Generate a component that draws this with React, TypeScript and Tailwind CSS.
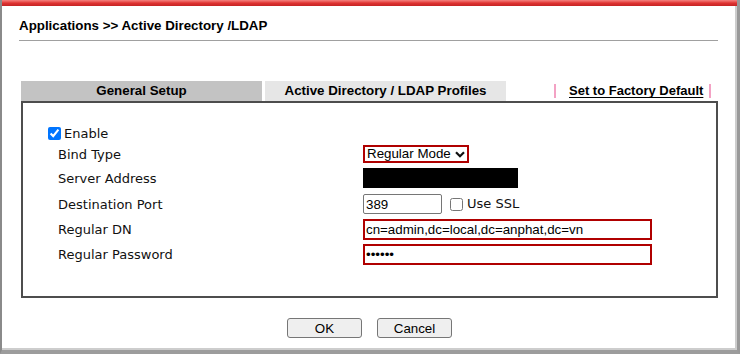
import React from "react";

const labelFont = "font-['DejaVu_Sans',Verdana,sans-serif] text-[13px] text-[#111]";
const arial = "font-['Liberation_Sans',Arial,sans-serif]";

function Row({label, mt, h, children}: {label: string; mt: string; h: string; children: React.ReactNode}) {
    return (
        <div className={`flex items-center pl-[35px] ${mt} ${h}`}>
            <div className={`w-[305px] pt-[1px] ${labelFont}`}>{label}</div>
            <div className="flex items-center">{children}</div>
        </div>
    );
}

export default function App() {
    return (
        <div className="w-[740px] h-[354px] bg-white flex flex-col border-l-2 border-r-[3px] border-b-[4px] border-l-[#8a8a8a] border-r-[#999] border-b-[#9c9c9c] shadow-[inset_-2px_-2px_0_#cdcdcd]">
            <div className="h-[6px] shrink-0 bg-gradient-to-b from-[#f58080] via-[#e03232] to-[#c42424]"/>

            <div className={`pl-[17px] pt-[12px] text-[13.33px] leading-[16px] font-bold text-black ${arial}`}>
                Applications &gt;&gt; Active Directory /LDAP
            </div>
            <div className="ml-[17px] mt-[6px] w-[699px] border-t border-[#a0a0a0]"/>

            {/* tabs */}
            <div className={`ml-[19px] mt-[40px] flex items-center h-[20px] text-[13.33px] font-bold text-black ${arial}`}>
                <div className="w-[241px] h-full bg-[#c3c3c3] flex items-center justify-center">General Setup</div>
                <div className="w-[241px] h-full ml-[3px] bg-[#e6e6e6] flex items-center justify-center">Active Directory / LDAP Profiles</div>
                <div className="ml-[48px] flex items-center">
                    <span className="w-[2px] h-[14px] bg-[#f3a2c4]"/>
                    <span className="ml-[13px] text-[13px] underline underline-offset-2">Set to Factory Default</span>
                    <span className="ml-[6px] w-[2px] h-[14px] bg-[#f3a2c4]"/>
                </div>
            </div>

            {/* box */}
            <div className="ml-[19px] w-[697px] border-2 border-[#4d4d4d] pt-[20px] pb-[31px]">
                <div className="flex items-center h-[20px] pl-[25px] pt-[1px]">
                    <input type="checkbox" defaultChecked className="w-[13px] h-[13px] accent-[#0075ff]"/>
                    <span className={`ml-[3px] ${labelFont}`}>Enable</span>
                </div>
                <Row label="Bind Type" mt="mt-[1px]" h="h-[20px]">
                    <div className={`w-[106px] h-[18px] border-2 border-[#b00000] flex items-center pl-[2px] text-[13.33px] text-black ${arial}`}>
                        <span>Regular Mode</span>
                        <svg width="10" height="7" viewBox="0 0 10 7" className="ml-[4px]">
                            <path d="M1 1.2 5 5.2 9 1.2" fill="none" stroke="#111" strokeWidth="2.2"/>
                        </svg>
                    </div>
                </Row>
                <Row label="Server Address" mt="mt-[4px]" h="h-[20px]">
                    <div className="w-[155px] h-[20px] bg-black"/>
                </Row>
                <Row label="Destination Port" mt="mt-[6px]" h="h-[20px]">
                    <input readOnly value="389"
                           className={`w-[79px] h-[20px] border border-[#767676] rounded-[2px] px-[2px] text-[13.33px] text-black ${arial}`}/>
                    <input type="checkbox" className="ml-[8px] w-[13px] h-[13px]"/>
                    <span className={`ml-[4px] ${labelFont}`}>Use SSL</span>
                </Row>
                <Row label="Regular DN" mt="mt-[5px]" h="h-[21px]">
                    <input readOnly value="cn=admin,dc=local,dc=anphat,dc=vn"
                           className={`w-[289px] h-[21px] border-2 border-[#b00000] px-[1px] text-[13.33px] text-black ${arial}`}/>
                </Row>
                <Row label="Regular Password" mt="mt-[4px]" h="h-[21px]">
                    <input readOnly type="password" value="123456"
                           className={`w-[289px] h-[21px] border-2 border-[#b00000] px-[1px] text-[13.33px] text-black ${arial}`}/>
                </Row>
            </div>

            {/* buttons */}
            <div className="ml-[19px] w-[697px] mt-[20px] flex justify-center gap-[15px]">
                <button className={`w-[75px] h-[20px] bg-[#efefef] border border-[#767676] rounded-[3px] text-[13.33px] text-black ${arial}`}>OK</button>
                <button className={`w-[75px] h-[20px] bg-[#efefef] border border-[#767676] rounded-[3px] text-[13.33px] text-black ${arial}`}>Cancel</button>
            </div>
        </div>
    );
}
